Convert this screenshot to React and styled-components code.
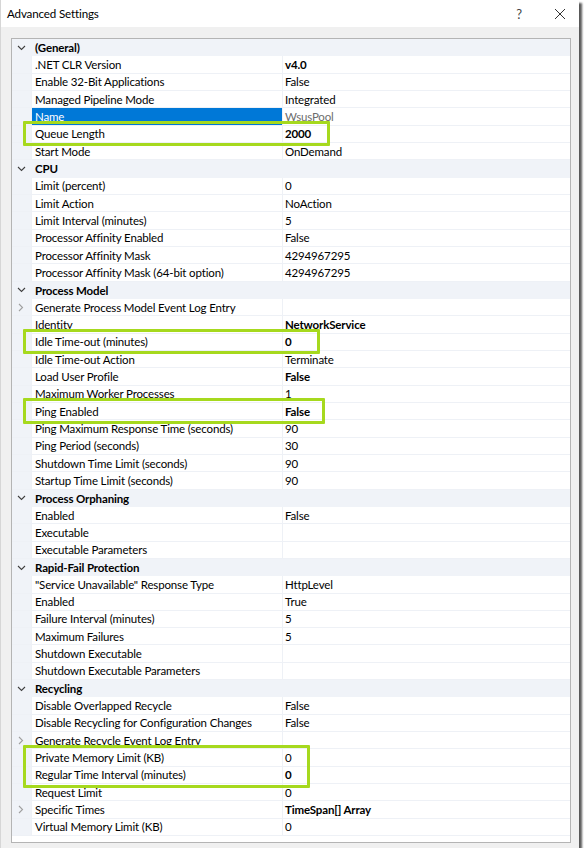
import React from 'react';
import styled, { createGlobalStyle } from 'styled-components';

const ROW = 17.33;

const GlobalStyle = createGlobalStyle`
  html, body {
    margin: 0;
    padding: 0;
    background: #ffffff;
  }
  body {
    font-family: Lato, "Liberation Sans", Arial, sans-serif;
    font-size: 11.5px;
    letter-spacing: -0.15px;
    color: #000;
  }
`;

const Window = styled.div`
  width: 579px;
  height: 848px;
  background: #f0f0f0;
  box-shadow: 3px 3px 2px rgba(0, 0, 0, 0.65);
  border-left: 1px solid #d6d6d6;
  box-sizing: border-box;
  display: flex;
  flex-direction: column;
  overflow: hidden;
`;

const TitleBar = styled.div`
  height: 27px;
  background: #ffffff;
  display: flex;
  align-items: center;
  padding-left: 6px;
  flex-shrink: 0;
`;

const Title = styled.div`
  flex: 1;
  font-size: 11.6px;
  color: #000;
`;

const TitleButton = styled.div`
  width: ${({ w }) => w}px;
  height: 27px;
  display: flex;
  align-items: center;
  justify-content: center;
  color: #444;
  font-size: 13px;
`;

const Body = styled.div`
  flex: 1;
  padding: 11px 8px 5px 10px;
  display: flex;
`;

const Grid = styled.div`
  position: relative;
  flex: 1;
  background: #ffffff;
  border: 1px solid #b4b4b4;
  box-sizing: border-box;
`;

const CategoryRow = styled.div`
  height: ${ROW}px;
  display: flex;
  align-items: center;
  background: #f0f3f8;
  font-weight: 700;
  box-sizing: border-box;
`;

const ChevronBox = styled.div`
  width: 20px;
  height: 100%;
  display: flex;
  align-items: center;
  justify-content: center;
  padding-right: 2px;
  box-sizing: border-box;
`;

const CategoryTitle = styled.div`
  padding-left: 3px;
`;

const PropertyRow = styled.div`
  height: ${ROW}px;
  display: grid;
  grid-template-columns: 19px 250px 1fr;
  column-gap: 1px;
  background: #eef1f6;
  padding-bottom: 1px;
  box-sizing: border-box;
`;

const Gutter = styled.div`
  background: #f0f3f8;
  display: flex;
  align-items: center;
  justify-content: center;
  padding-right: 1px;
  box-sizing: border-box;
`;

const LabelCell = styled.div`
  background: ${({ selected }) => (selected ? '#0078d7' : '#ffffff')};
  color: ${({ selected }) => (selected ? '#ffffff' : '#000000')};
  display: flex;
  align-items: center;
  padding-left: 3px;
  white-space: nowrap;
  overflow: hidden;
`;

const ValueCell = styled.div`
  background: #ffffff;
  color: ${({ muted }) => (muted ? '#6d6d6d' : '#000000')};
  font-weight: ${({ bold }) => (bold ? 700 : 400)};
  display: flex;
  align-items: center;
  padding-left: 2px;
  white-space: nowrap;
`;

const Highlight = styled.div`
  position: absolute;
  left: 11px;
  border: 3px solid #a6d91e;
  border-radius: 1px;
  box-sizing: border-box;
  pointer-events: none;
`;

const sections = [
  {
    title: '(General)',
    rows: [
      { label: '.NET CLR Version', value: 'v4.0', bold: true },
      { label: 'Enable 32-Bit Applications', value: 'False' },
      { label: 'Managed Pipeline Mode', value: 'Integrated' },
      { label: 'Name', value: 'WsusPool', selected: true, muted: true },
      { label: 'Queue Length', value: '2000', bold: true },
      { label: 'Start Mode', value: 'OnDemand' },
    ],
  },
  {
    title: 'CPU',
    rows: [
      { label: 'Limit (percent)', value: '0' },
      { label: 'Limit Action', value: 'NoAction' },
      { label: 'Limit Interval (minutes)', value: '5' },
      { label: 'Processor Affinity Enabled', value: 'False' },
      { label: 'Processor Affinity Mask', value: '4294967295' },
      { label: 'Processor Affinity Mask (64-bit option)', value: '4294967295' },
    ],
  },
  {
    title: 'Process Model',
    rows: [
      { label: 'Generate Process Model Event Log Entry', value: '', expand: true },
      { label: 'Identity', value: 'NetworkService', bold: true },
      { label: 'Idle Time-out (minutes)', value: '0', bold: true },
      { label: 'Idle Time-out Action', value: 'Terminate' },
      { label: 'Load User Profile', value: 'False', bold: true },
      { label: 'Maximum Worker Processes', value: '1' },
      { label: 'Ping Enabled', value: 'False', bold: true },
      { label: 'Ping Maximum Response Time (seconds)', value: '90' },
      { label: 'Ping Period (seconds)', value: '30' },
      { label: 'Shutdown Time Limit (seconds)', value: '90' },
      { label: 'Startup Time Limit (seconds)', value: '90' },
    ],
  },
  {
    title: 'Process Orphaning',
    rows: [
      { label: 'Enabled', value: 'False' },
      { label: 'Executable', value: '' },
      { label: 'Executable Parameters', value: '' },
    ],
  },
  {
    title: 'Rapid-Fail Protection',
    rows: [
      { label: '"Service Unavailable" Response Type', value: 'HttpLevel' },
      { label: 'Enabled', value: 'True' },
      { label: 'Failure Interval (minutes)', value: '5' },
      { label: 'Maximum Failures', value: '5' },
      { label: 'Shutdown Executable', value: '' },
      { label: 'Shutdown Executable Parameters', value: '' },
    ],
  },
  {
    title: 'Recycling',
    rows: [
      { label: 'Disable Overlapped Recycle', value: 'False' },
      { label: 'Disable Recycling for Configuration Changes', value: 'False' },
      { label: 'Generate Recycle Event Log Entry', value: '', expand: true },
      { label: 'Private Memory Limit (KB)', value: '0' },
      { label: 'Regular Time Interval (minutes)', value: '0', bold: true },
      { label: 'Request Limit', value: '0' },
      { label: 'Specific Times', value: 'TimeSpan[] Array', bold: true, expand: true },
      { label: 'Virtual Memory Limit (KB)', value: '0' },
    ],
  },
];

// row index, number of rows, right edge in page px
const highlights = [
  { row: 5, span: 1, right: 330 },
  { row: 17, span: 1, right: 320 },
  { row: 21, span: 1, right: 325 },
  { row: 41, span: 2, right: 310 },
];

const ChevronDown = () => (
  <svg width="9" height="6" viewBox="0 0 9 6">
    <polyline points="1,1 4.5,4.5 8,1" fill="none" stroke="#404040" strokeWidth="1.1" />
  </svg>
);

const ChevronRight = () => (
  <svg width="6" height="9" viewBox="0 0 6 9">
    <polyline points="1,1 4.5,4.5 1,8" fill="none" stroke="#a0a0a0" strokeWidth="1.1" />
  </svg>
);

const CloseIcon = () => (
  <svg width="12" height="12" viewBox="0 0 12 12">
    <path d="M1 1 L11 11 M11 1 L1 11" stroke="#333" strokeWidth="1" fill="none" />
  </svg>
);

const App = () => {
  return (
    <>
      <GlobalStyle />
      <Window>
        <TitleBar>
          <Title>Advanced Settings</Title>
          <TitleButton w={44}>?</TitleButton>
          <TitleButton w={38}>
            <CloseIcon />
          </TitleButton>
        </TitleBar>
        <Body>
          <Grid>
            {sections.map((section) => (
              <React.Fragment key={section.title}>
                <CategoryRow>
                  <ChevronBox>
                    <ChevronDown />
                  </ChevronBox>
                  <CategoryTitle>{section.title}</CategoryTitle>
                </CategoryRow>
                {section.rows.map((row, i) => (
                  <PropertyRow key={section.title + i}>
                    <Gutter>{row.expand && <ChevronRight />}</Gutter>
                    <LabelCell selected={row.selected}>{row.label}</LabelCell>
                    <ValueCell bold={row.bold} muted={row.muted}>
                      {row.value}
                    </ValueCell>
                  </PropertyRow>
                ))}
              </React.Fragment>
            ))}
            {highlights.map((h) => (
              <Highlight
                key={h.row}
                style={{
                  top: h.row * ROW - 4.5,
                  height: h.span * ROW + 8,
                  width: h.right - 23,
                }}
              />
            ))}
          </Grid>
        </Body>
      </Window>
    </>
  );
};

export default App;
